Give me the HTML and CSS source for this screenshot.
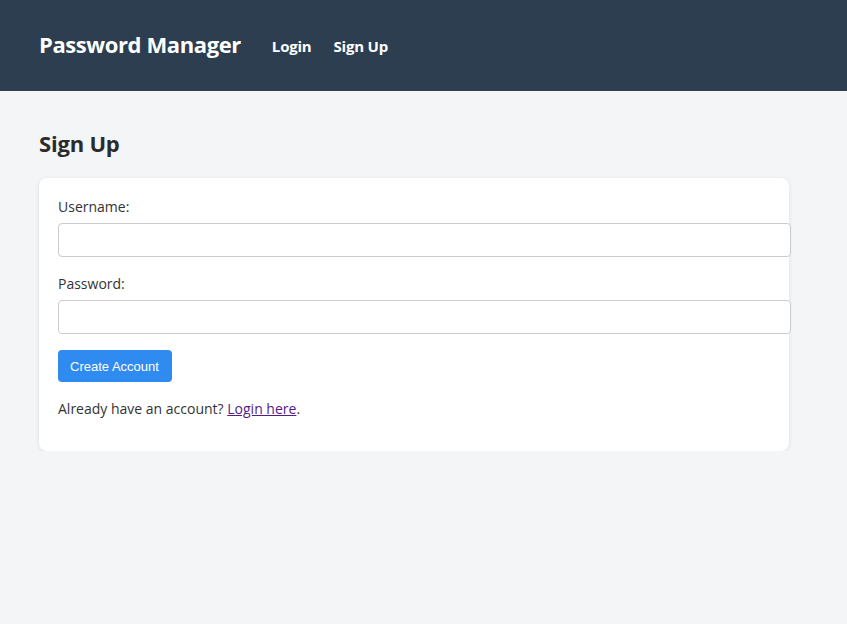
FILE: index.html
```html
<!DOCTYPE html>
<html>
<head>
<meta charset="utf-8">
<link rel="stylesheet" href="styles.css">
</head>
<body>
<header class="topbar">
  <div class="brand">Password Manager</div>
  <nav class="nav">
    <a href="#">Login</a>
    <a href="#">Sign Up</a>
  </nav>
</header>
<main class="main">
  <h2 class="title">Sign Up</h2>
  <form class="card">
    <label class="label">Username:</label>
    <input class="input" type="text">
    <label class="label">Password:</label>
    <input class="input" type="password">
    <button class="btn" type="button">Create Account</button>
    <p class="note">Already have an account? <a href="#" class="link">Login here</a>.</p>
  </form>
</main>
</body>
</html>
```
FILE: styles.css
```css
html, body {
  margin: 0;
  padding: 0;
}
body {
  background: #f4f5f7;
  font-family: "Open Sans", "Noto Sans", sans-serif;
  color: #333;
}
.topbar {
  background: #2c3e50;
  height: 91px;
  display: flex;
  align-items: center;
  padding: 0 39px;
  box-sizing: border-box;
}
.brand {
  color: #fff;
  font-weight: 700;
  font-size: 22px;
  letter-spacing: -0.4px;
  margin-top: -4px;
}
.nav {
  display: flex;
  gap: 22px;
  margin-left: 31px;
  padding-top: 1px;
}
.nav a {
  color: #fff;
  text-decoration: none;
  font-weight: 700;
  font-size: 15px;
  letter-spacing: -0.2px;
}
.main {
  padding: 0 39px;
}
.title {
  margin: 0;
  padding-top: 38px;
  font-size: 22px;
  line-height: 28px;
  font-weight: 700;
  color: #2b2b2b;
  margin-bottom: 21px;
  letter-spacing: -0.2px;
}
.card {
  width: 750px;
  box-sizing: border-box;
  background: #fff;
  border-radius: 8px;
  box-shadow: 0 1px 4px rgba(0,0,0,0.1);
  padding: 19px 19px 32px;
  margin: 0;
}
.label {
  display: block;
  font-size: 14px;
  line-height: 19px;
  margin-bottom: 7px;
  color: #333;
}
.input {
  display: block;
  width: 100%;
  padding: 8px 9px 8px 10px;
  font-size: 14px;
  line-height: 16px;
  box-sizing: content-box;
  height: 16px;
  border: 1px solid #ccc;
  border-radius: 4px;
  margin: 0 0 17px;
  background: #fff;
}
.btn {
  display: block;
  background: #2f8bf0;
  color: #fff;
  border: none;
  border-radius: 4px;
  font-family: "Liberation Sans", Arial, sans-serif;
  font-size: 13px;
  height: 32px;
  padding: 0 13px 0 12px;
  margin-top: -1px;
}
.note {
  margin: 17px 0 0;
  font-size: 14px;
  line-height: 20px;
}
.link {
  color: #551a8b;
}
```
